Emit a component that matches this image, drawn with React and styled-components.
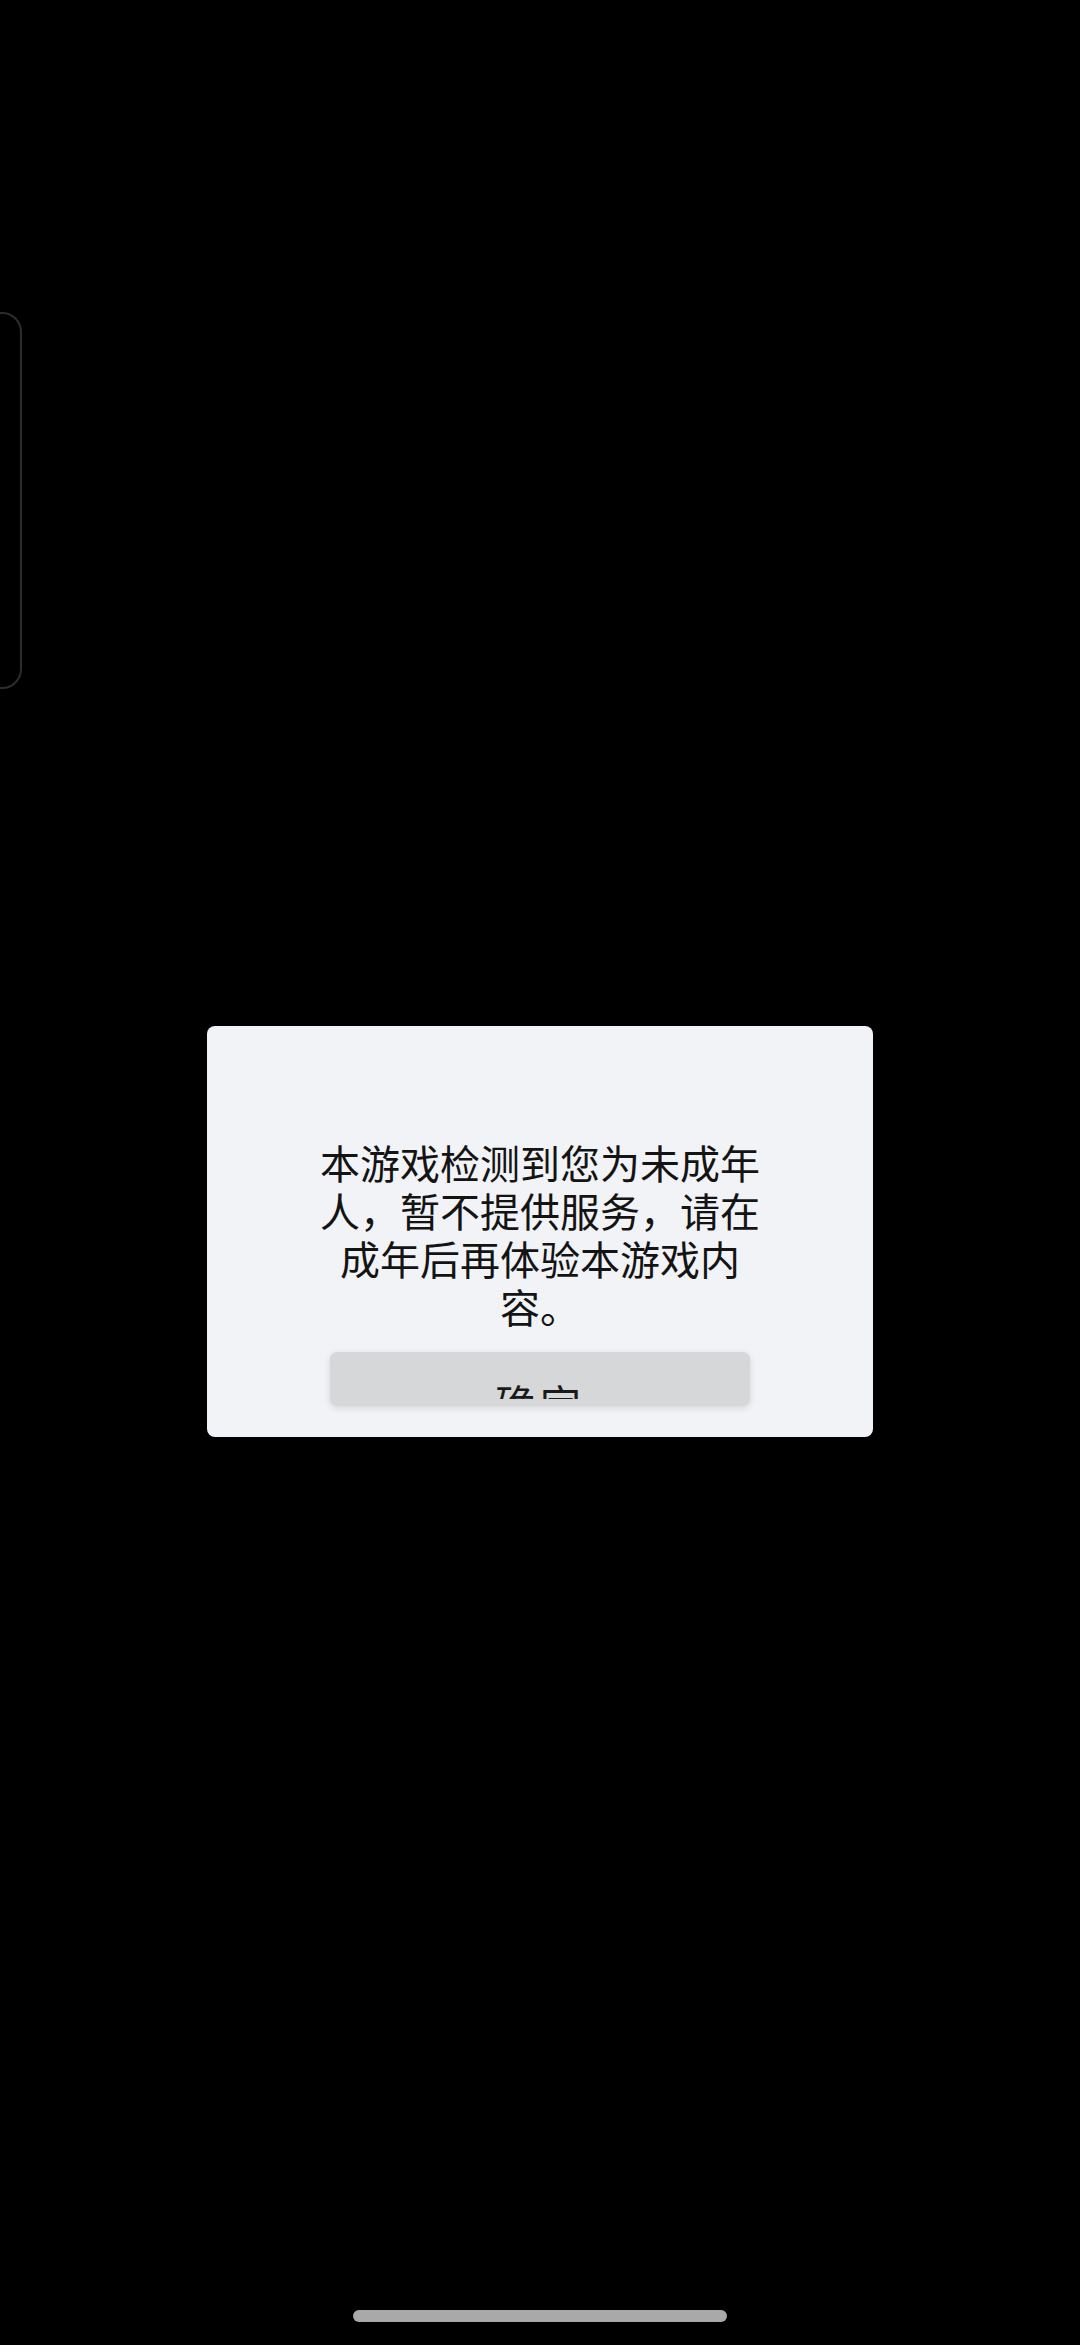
import React from 'react';
import styled, { createGlobalStyle } from 'styled-components';

const GlobalStyle = createGlobalStyle`
  html, body {
    margin: 0;
    padding: 0;
    background: #000;
  }
  body {
    font-family: "Noto Sans CJK SC", "Noto Sans", sans-serif;
  }
`;

const Screen = styled.div`
  position: relative;
  width: 1080px;
  height: 2345px;
  background: #000;
  display: flex;
  flex-direction: column;
  align-items: center;
  overflow: hidden;
`;

const SideHandle = styled.div`
  position: absolute;
  left: -22px;
  top: 312px;
  width: 40px;
  height: 373px;
  border: 2px solid #2c2f29;
  border-radius: 20px;
`;

const Dialog = styled.div`
  margin-top: 1026px;
  width: 666px;
  height: 411px;
  box-sizing: border-box;
  padding-top: 112px;
  background: #f2f3f7;
  border-radius: 8px;
  display: flex;
  flex-direction: column;
  align-items: center;
`;

const Message = styled.p`
  margin: 0;
  width: 444px;
  font-size: 40px;
  line-height: 48px;
  color: #141414;
  text-align: center;
`;

const Button = styled.button`
  margin-top: 22px;
  width: 420px;
  height: 54px;
  padding: 0;
  border: none;
  border-radius: 7px;
  background: #d6d7d8;
  box-shadow: 0 2px 7px rgba(0, 0, 0, 0.12);
  font-family: inherit;
`;

const Label = styled.div`
  box-sizing: border-box;
  height: 40px;
  padding-top: 23px;
  overflow: hidden;
  font-size: 41px;
  line-height: 40px;
  color: #1a1a1a;
  text-align: center;
  letter-spacing: 4px;
`;

const HomeBar = styled.div`
  margin-top: auto;
  margin-bottom: 23px;
  width: 374px;
  height: 12px;
  border-radius: 6px;
  background: #a9a9a9;
`;

const App = () => {
  return (
    <>
      <GlobalStyle />
      <Screen>
        <SideHandle />
        <Dialog>
          <Message>本游戏检测到您为未成年人，暂不提供服务，请在成年后再体验本游戏内容。</Message>
          <Button>
            <Label>确定</Label>
          </Button>
        </Dialog>
        <HomeBar />
      </Screen>
    </>
  );
};

export default App;
